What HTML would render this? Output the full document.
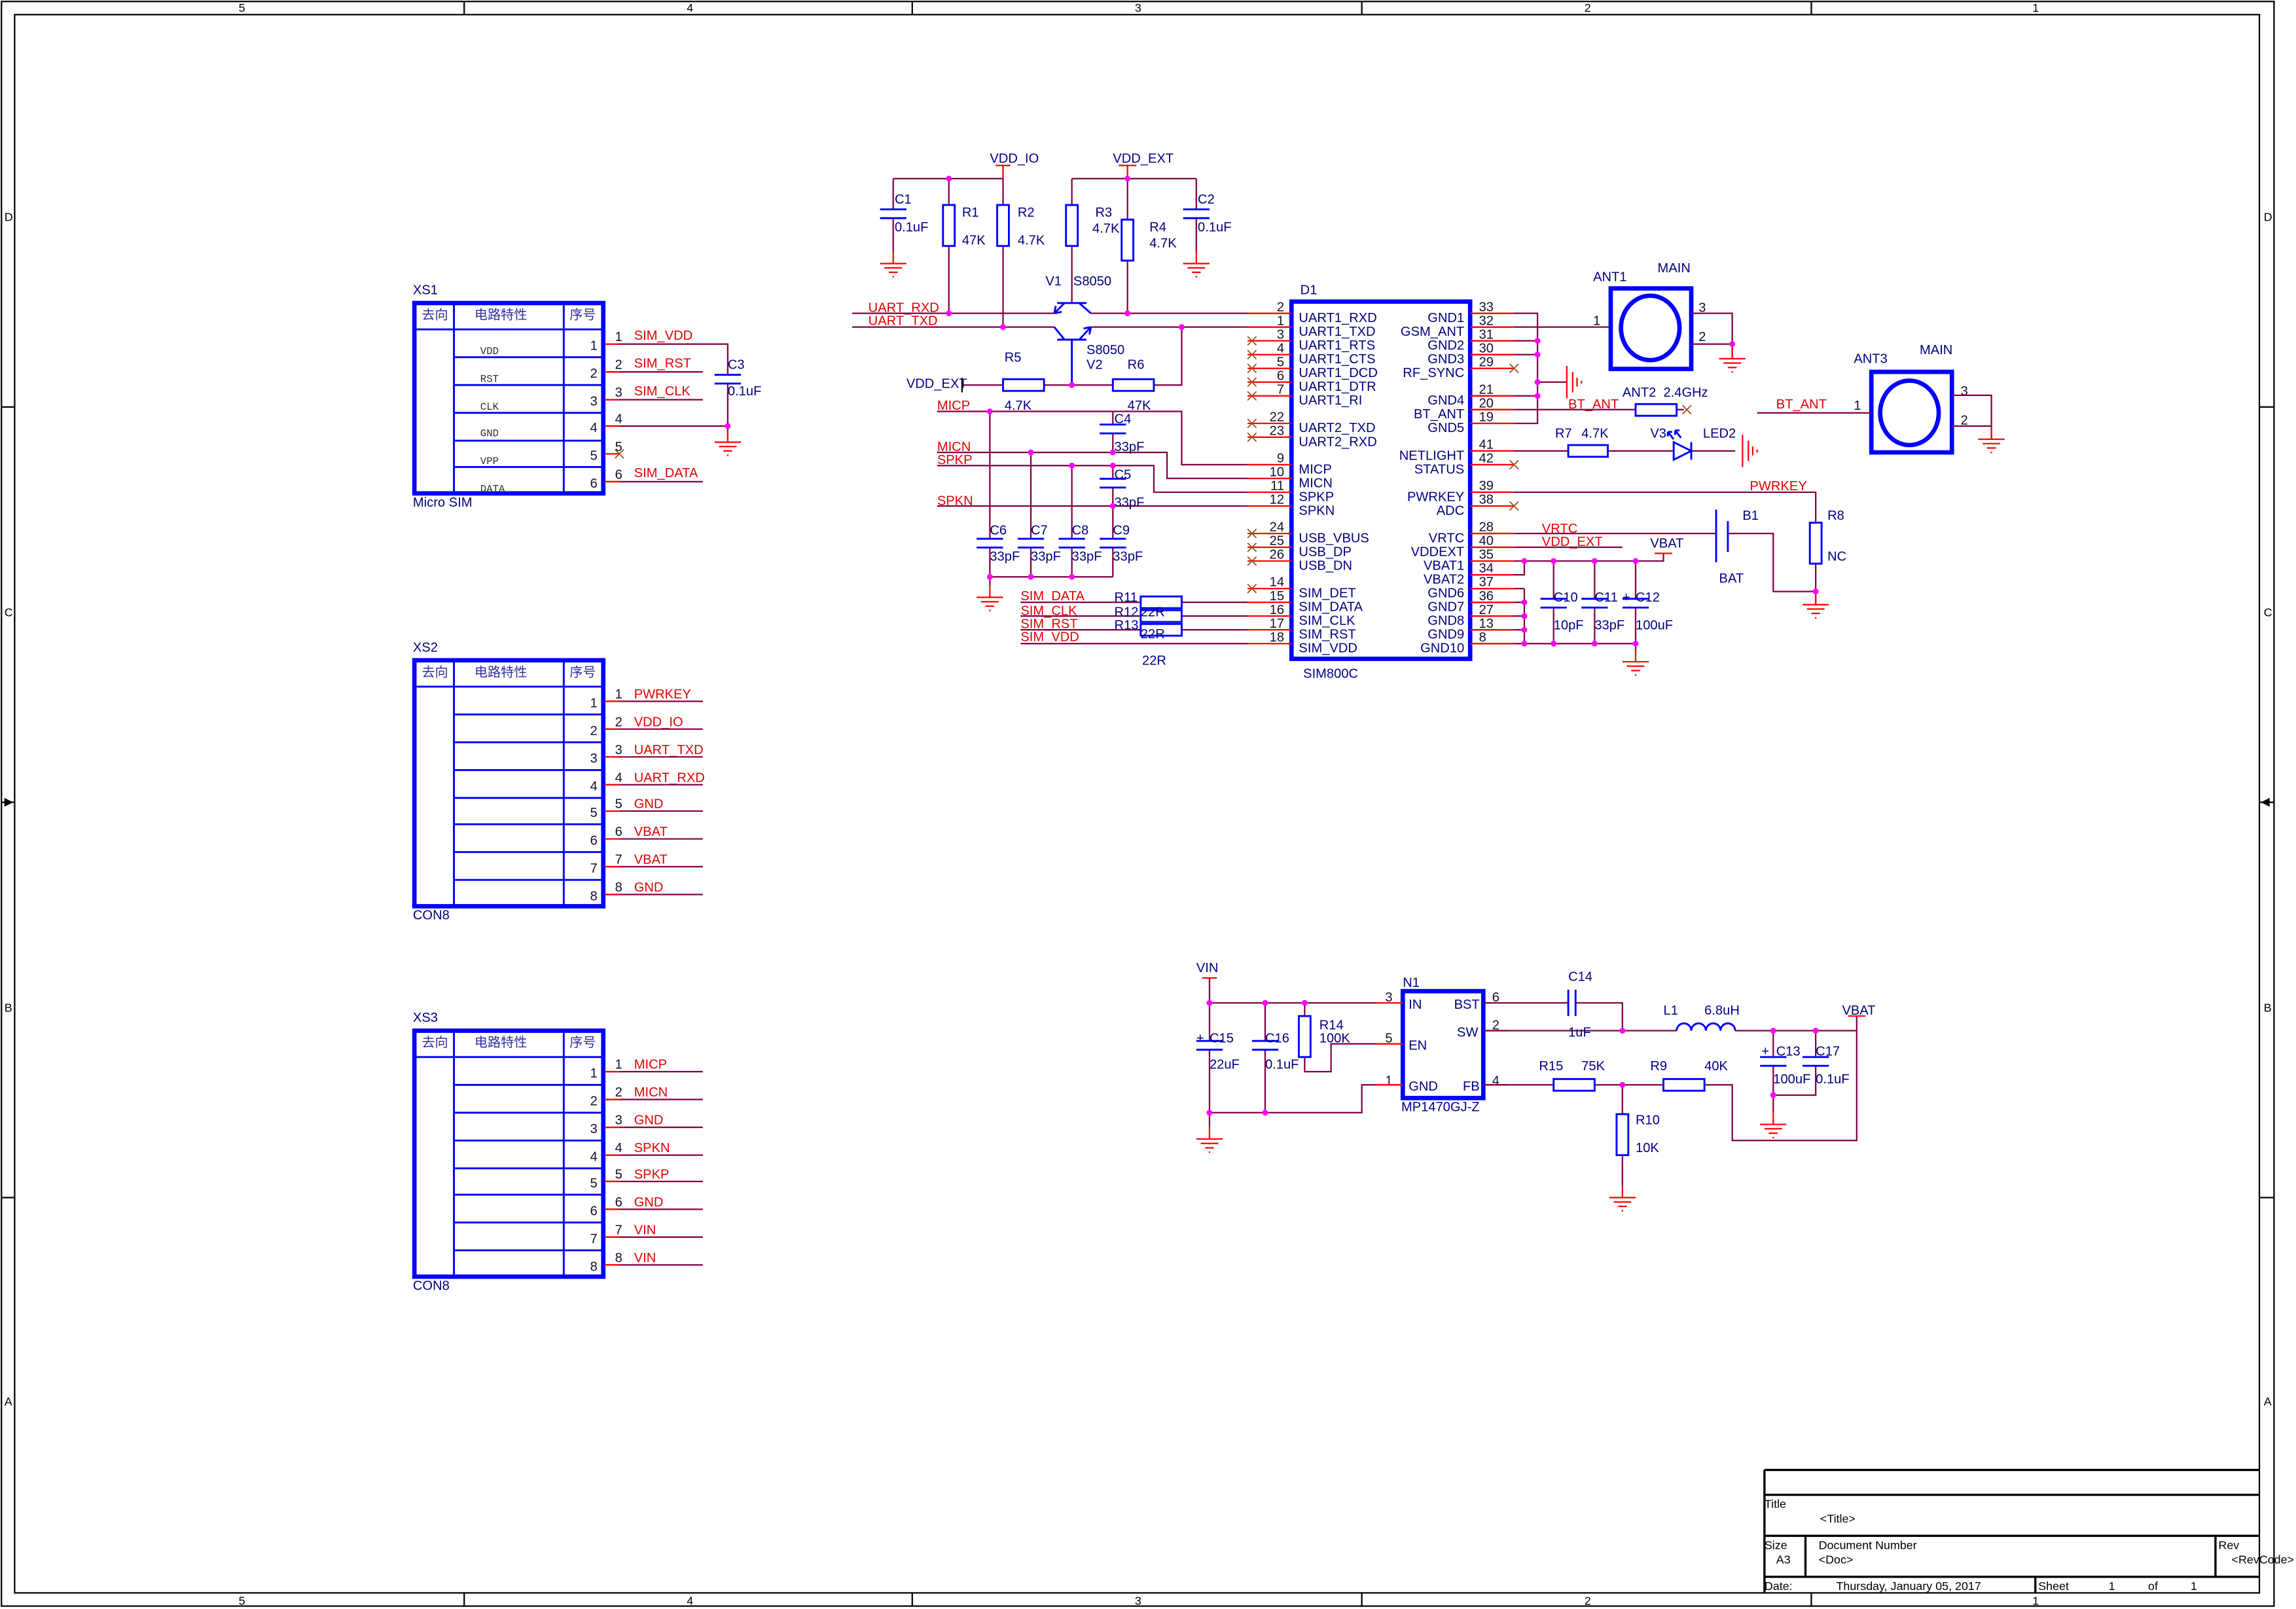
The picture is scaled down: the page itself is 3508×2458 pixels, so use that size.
<!DOCTYPE html>
<html><head><meta charset="utf-8"><style>
html,body{margin:0;padding:0;background:#fff}
svg{display:block}
text{font-family:"Liberation Sans","Noto Sans CJK SC",sans-serif;font-size:9px;fill:#000080}
.w{stroke:#800040;stroke-width:1;fill:none}
.r{stroke:#ff0000;stroke-width:1;fill:none}
.b{stroke:#0000ff;stroke-width:1.3;fill:none}
.B{stroke:#0000ff;stroke-width:3;fill:none}
.k{stroke:#000;stroke-width:1;fill:none}
.n{fill:#e00000}
.p{fill:#101030}
.c{font-family:"Noto Sans CJK SC",sans-serif;fill:#3030a0}
.s{font-family:"Liberation Mono",monospace;font-size:7px;fill:#303030}
.f{fill:#000;font-size:8px}
</style></head><body>
<svg width="3508" height="2458" viewBox="0 0 1568 1099" preserveAspectRatio="none" xmlns="http://www.w3.org/2000/svg">
<defs>
<g id="g"><path class="r" d="M0,-8V0M-9,0H9M-6,3H6M-3,6H3M-0.5,9H0.5"/></g>
<g id="x"><path d="M-3,-3L3,3M-3,3L3,-3" stroke="#a05020" stroke-width="0.8"/></g>
<g id="cap"><path class="b" d="M-9,-3H9M-9,3H9"/></g>
</defs>
<rect width="1568" height="1099" fill="#fff"/>
<!-- frame -->
<rect x="1" y="1" width="1552" height="1096" class="k" stroke="#555"/>
<rect x="10" y="10" width="1533" height="1078" class="k" stroke="#555"/>
<path class="k" stroke="#555" d="M317,1V10M623,1V10M930,1V10M1237,1V10M317,1088V1097M623,1088V1097M930,1088V1097M1237,1088V1097M1,278H10M1,548H10M1,818H10M1543,278H1553M1543,548H1553M1543,818H1553"/>
<g class="f" font-size="7"><text x="163" y="8" class="f">5</text><text x="469" y="8" class="f">4</text><text x="775" y="8" class="f">3</text><text x="1082" y="8" class="f">2</text><text x="1388" y="8" class="f">1</text>
<text x="163" y="1096" class="f">5</text><text x="469" y="1096" class="f">4</text><text x="775" y="1096" class="f">3</text><text x="1082" y="1096" class="f">2</text><text x="1388" y="1096" class="f">1</text>
<text x="3" y="151" class="f">D</text><text x="3" y="421" class="f">C</text><text x="3" y="691" class="f">B</text><text x="3" y="960" class="f">A</text>
<text x="1546" y="151" class="f">D</text><text x="1546" y="421" class="f">C</text><text x="1546" y="691" class="f">B</text><text x="1546" y="960" class="f">A</text></g>
<path d="M3,545L9,548L3,551Z M1550,545L1544,548L1550,551Z" fill="#000"/>
<!-- title block -->
<path d="M1205,1004H1543M1205,1021H1543M1205,1049H1543M1205,1077H1543M1205,1004V1088M1233,1049V1077M1513,1049V1077M1390,1077V1088" stroke="#000" stroke-width="1.5" fill="none"/>
<text x="1205" y="1030" class="f">Title</text><text x="1243" y="1040" class="f">&lt;Title&gt;</text>
<text x="1205" y="1058" class="f">Size</text><text x="1213" y="1068" class="f">A3</text>
<text x="1242" y="1058" class="f">Document Number</text><text x="1242" y="1068" class="f">&lt;Doc&gt;</text>
<text x="1515" y="1058" class="f">Rev</text><text x="1524" y="1068" class="f">&lt;RevCode&gt;</text>
<text x="1205" y="1086" class="f">Date:</text><text x="1254" y="1086" class="f">Thursday, January 05, 2017</text>
<text x="1392" y="1086" class="f">Sheet</text><text x="1440" y="1086" class="f">1</text><text x="1467" y="1086" class="f">of</text><text x="1496" y="1086" class="f">1</text>

<!-- ===== top: pullups and transistors ===== -->
<text x="676" y="111">VDD_IO</text><path class="r" d="M680,113H690M685,113V122"/>
<path class="w" d="M610,122H685M610,122V143M610,149V172M648,122V140M648,168V214M685,122V140M685,168V223.4"/>
<use href="#cap" x="610" y="146"/><use href="#g" x="610" y="180"/>
<rect x="644" y="140" width="8" height="28" class="b"/><rect x="681" y="140" width="8" height="28" class="b"/>
<text x="611" y="139">C1</text><text x="611" y="158">0.1uF</text>
<text x="657" y="148">R1</text><text x="657" y="167">47K</text><text x="695" y="148">R2</text><text x="695" y="167">4.7K</text>
<text x="760" y="111">VDD_EXT</text><path class="r" d="M764,113H776M770,113V122"/>
<path class="w" d="M732,122H817M732,122V140M732,168V207M770,122V150M770,178V214M817,122V143M817,149V172"/>
<rect x="728" y="140" width="8" height="28" class="b"/><rect x="766" y="150" width="8" height="28" class="b"/>
<use href="#cap" x="817" y="146"/><use href="#g" x="817" y="180"/>
<text x="748" y="148">R3</text><text x="746" y="159">4.7K</text><text x="785" y="158">R4</text><text x="785" y="169">4.7K</text>
<text x="818" y="139">C2</text><text x="818" y="158">0.1uF</text>
<!-- V1 -->
<path class="b" d="M722,207H742M727,207L720,214M737,207L745,214M720,214l1,-5M720,214l5,-1"/>
<!-- V2 -->
<path class="b" d="M722,232H742M727,232L720,223.4M737,232L745,223.4M745,223.4l-5,1M745,223.4l-1,5M732,232V263"/>
<text x="714" y="195">V1</text><text x="733" y="195">S8050</text><text x="742" y="242">S8050</text><text x="742" y="252">V2</text>
<text x="593" y="213" class="n">UART_RXD</text><text x="593" y="222" class="n">UART_TXD</text>
<path class="w" d="M582,214H720M745,214H882M582,223.4H720M745,223.4H882M807,223.4V263H788M760,263H713M685,263H657"/>
<path class="k" d="M657,258V268"/>
<rect x="685" y="259" width="28" height="8" class="b"/><rect x="760" y="259" width="28" height="8" class="b"/>
<text x="619" y="265">VDD_EXT</text><text x="686" y="247">R5</text><text x="686" y="280">4.7K</text><text x="770" y="252">R6</text><text x="770" y="280">47K</text>
<!-- audio -->
<text x="640" y="280" class="n">MICP</text><text x="640" y="308" class="n">MICN</text><text x="640" y="317" class="n">SPKP</text><text x="640" y="345" class="n">SPKN</text>
<path class="w" d="M640,281H807V317.4H852M640,309H797V326.8H852M640,318H788V336.2H852M640,345.6H852M760,281V290M760,296V309M760,318V327M760,333V345.6M676,281V368M676,374V394M704,309V368M704,374V394M732,318V368M732,374V394M760,345.6V368M760,374V394M676,394H760M676,394V400"/>
<use href="#cap" x="760" y="293"/><use href="#cap" x="760" y="330"/>
<use href="#cap" x="676" y="371"/><use href="#cap" x="704" y="371"/><use href="#cap" x="732" y="371"/><use href="#cap" x="760" y="371"/>
<use href="#g" x="676" y="408"/>
<text x="761" y="289">C4</text><text x="761" y="308">33pF</text><text x="761" y="327">C5</text><text x="761" y="346">33pF</text>
<text x="676" y="365">C6</text><text x="676" y="383">33pF</text><text x="704" y="365">C7</text><text x="704" y="383">33pF</text>
<text x="732" y="365">C8</text><text x="732" y="383">33pF</text><text x="760" y="365">C9</text><text x="760" y="383">33pF</text>
<!-- SIM -->
<text x="697" y="410" class="n">SIM_DATA</text><text x="697" y="420" class="n">SIM_CLK</text><text x="697" y="429" class="n">SIM_RST</text><text x="697" y="438" class="n">SIM_VDD</text>
<path class="w" d="M697,411.4H779M807,411.4H852M697,420.8H779M807,420.8H852M697,430.2H779M807,430.2H852M697,439.6H852"/>
<rect x="779" y="407.4" width="28" height="8" class="b"/><rect x="779" y="416.8" width="28" height="8" class="b"/><rect x="779" y="426.2" width="28" height="8" class="b"/>
<text x="761" y="411">R11</text><text x="761" y="421">R12</text><text x="761" y="430">R13</text><text x="779" y="421">22R</text><text x="779" y="436">22R</text><text x="780" y="454">22R</text>
<g fill="#ff00ff">
<circle cx="648" cy="122" r="2"/><circle cx="770" cy="122" r="2"/><circle cx="648" cy="214" r="2"/><circle cx="685" cy="223.4" r="2"/><circle cx="770" cy="214" r="2"/><circle cx="807" cy="223.4" r="2"/><circle cx="732" cy="263" r="2"/>
<circle cx="676" cy="281" r="2"/><circle cx="704" cy="309" r="2"/><circle cx="732" cy="318" r="2"/><circle cx="760" cy="309" r="2"/><circle cx="760" cy="318" r="2"/><circle cx="760" cy="345.6" r="2"/><circle cx="676" cy="394" r="2"/><circle cx="704" cy="394" r="2"/><circle cx="732" cy="394" r="2"/>
</g>

<!-- ===== D1 ===== -->
<rect x="882" y="206" width="122" height="244" class="B"/>
<text x="888" y="201">D1</text><text x="890" y="463">SIM800C</text>
<path class="r" d="M852,214H882M852,223.4H882M852,232.8H882M852,242.2H882M852,251.6H882M852,261H882M852,270.4H882M852,289.2H882M852,298.6H882M852,317.4H882M852,326.8H882M852,336.2H882M852,345.6H882M852,364.4H882M852,373.8H882M852,383.2H882M852,402H882M852,411.4H882M852,420.8H882M852,430.2H882M852,439.6H882"/>
<g><use href="#x" x="855" y="232.8"/><use href="#x" x="855" y="242.2"/><use href="#x" x="855" y="251.6"/><use href="#x" x="855" y="261"/><use href="#x" x="855" y="270.4"/><use href="#x" x="855" y="289.2"/><use href="#x" x="855" y="298.6"/><use href="#x" x="855" y="364.4"/><use href="#x" x="855" y="373.8"/><use href="#x" x="855" y="383.2"/><use href="#x" x="855" y="402"/></g>
<g text-anchor="end">
<text x="877" y="212.5" class="p">2</text><text x="877" y="222" class="p">1</text><text x="877" y="231.3" class="p">3</text><text x="877" y="240.7" class="p">4</text><text x="877" y="250.1" class="p">5</text><text x="877" y="259.5" class="p">6</text><text x="877" y="268.9" class="p">7</text><text x="877" y="287.7" class="p">22</text><text x="877" y="297.1" class="p">23</text><text x="877" y="315.9" class="p">9</text><text x="877" y="325.3" class="p">10</text><text x="877" y="334.7" class="p">11</text><text x="877" y="344.1" class="p">12</text><text x="877" y="362.9" class="p">24</text><text x="877" y="372.3" class="p">25</text><text x="877" y="381.7" class="p">26</text><text x="877" y="400.5" class="p">14</text><text x="877" y="409.9" class="p">15</text><text x="877" y="419.3" class="p">16</text><text x="877" y="428.7" class="p">17</text><text x="877" y="438.1" class="p">18</text>
</g>
<g>
<text x="887" y="220">UART1_RXD</text><text x="887" y="229.4">UART1_TXD</text><text x="887" y="238.8">UART1_RTS</text><text x="887" y="248.2">UART1_CTS</text><text x="887" y="257.6">UART1_DCD</text><text x="887" y="267">UART1_DTR</text><text x="887" y="276.4">UART1_RI</text><text x="887" y="295.2">UART2_TXD</text><text x="887" y="304.6">UART2_RXD</text><text x="887" y="323.4">MICP</text><text x="887" y="332.8">MICN</text><text x="887" y="342.2">SPKP</text><text x="887" y="351.6">SPKN</text><text x="887" y="370.4">USB_VBUS</text><text x="887" y="379.8">USB_DP</text><text x="887" y="389.2">USB_DN</text><text x="887" y="408">SIM_DET</text><text x="887" y="417.4">SIM_DATA</text><text x="887" y="426.8">SIM_CLK</text><text x="887" y="436.2">SIM_RST</text><text x="887" y="445.6">SIM_VDD</text>
</g>
<g text-anchor="end">
<text x="1000" y="220">GND1</text><text x="1000" y="229.4">GSM_ANT</text><text x="1000" y="238.8">GND2</text><text x="1000" y="248.2">GND3</text><text x="1000" y="257.6">RF_SYNC</text><text x="1000" y="276.4">GND4</text><text x="1000" y="285.8">BT_ANT</text><text x="1000" y="295.2">GND5</text><text x="1000" y="314">NETLIGHT</text><text x="1000" y="323.4">STATUS</text><text x="1000" y="342.2">PWRKEY</text><text x="1000" y="351.6">ADC</text><text x="1000" y="370.4">VRTC</text><text x="1000" y="379.8">VDDEXT</text><text x="1000" y="389.2">VBAT1</text><text x="1000" y="398.6">VBAT2</text><text x="1000" y="408">GND6</text><text x="1000" y="417.4">GND7</text><text x="1000" y="426.8">GND8</text><text x="1000" y="436.2">GND9</text><text x="1000" y="445.6">GND10</text>
</g>
<g>
<text x="1010" y="212.5" class="p">33</text><text x="1010" y="222" class="p">32</text><text x="1010" y="231.3" class="p">31</text><text x="1010" y="240.7" class="p">30</text><text x="1010" y="250.1" class="p">29</text><text x="1010" y="268.9" class="p">21</text><text x="1010" y="278.3" class="p">20</text><text x="1010" y="287.7" class="p">19</text><text x="1010" y="306.5" class="p">41</text><text x="1010" y="315.9" class="p">42</text><text x="1010" y="334.7" class="p">39</text><text x="1010" y="344.1" class="p">38</text><text x="1010" y="362.9" class="p">28</text><text x="1010" y="372.3" class="p">40</text><text x="1010" y="381.7" class="p">35</text><text x="1010" y="391.1" class="p">34</text><text x="1010" y="400.5" class="p">37</text><text x="1010" y="409.9" class="p">36</text><text x="1010" y="419.3" class="p">27</text><text x="1010" y="428.7" class="p">13</text><text x="1010" y="438.1" class="p">8</text>
</g>
<!-- right wires -->
<path class="w" d="M1004,214H1050V289.2H1004M1004,232.8H1050M1004,242.2H1050M1004,270.4H1050M1050,261H1070M1004,223.4H1100M1004,279.8H1117M1145,279.8H1150M1004,308H1071M1098,308H1143M1155,308H1185M1004,336.2H1240V357M1240,385V404H1211V364.4H1180M1172,364.4H1004M1004,373.8H1108M1004,383.2H1136V378M1004,392.6H1041V383.2M1004,402H1041M1004,411.4H1041M1004,420.8H1041M1004,430.2H1041M1041,402V439.6M1004,439.6H1117M1061,383.2V409M1061,415V439.6M1089,383.2V409M1089,415V439.6M1117,383.2V409M1117,415V439.6V448M1240,404V413"/>
<path class="r" d="M1004,214H1034M1004,223.4H1034M1004,232.8H1034M1004,242.2H1034M1004,251.6H1034M1004,270.4H1034M1004,279.8H1034M1004,289.2H1034M1004,308H1034M1004,317.4H1034M1004,336.2H1034M1004,345.6H1034M1004,364.4H1034M1004,373.8H1034M1004,383.2H1034M1004,392.6H1034M1004,402H1034M1004,411.4H1034M1004,420.8H1034M1004,430.2H1034M1004,439.6H1034M1130,378H1142"/>
<use href="#x" x="1034" y="251.6"/><use href="#x" x="1034" y="317.4"/><use href="#x" x="1034" y="345.6"/><use href="#x" x="1152" y="279.8"/>
<!-- chassis grounds -->
<path class="r" d="M1070,250V272M1074,254V268M1077,258V264M1080,260V262M1190,297V319M1194,301V315M1197,305V311M1200,307V309"/>
<!-- ANT1 -->
<rect x="1100" y="197" width="55" height="55" class="B"/><ellipse cx="1127" cy="224" rx="20" ry="22" class="B" stroke-width="2.5"/>
<text x="1088" y="192">ANT1</text><text x="1132" y="186">MAIN</text><text x="1088" y="222" class="p">1</text><text x="1160" y="213" class="p">3</text><text x="1160" y="233" class="p">2</text>
<path class="w" d="M1155,214H1183V245M1155,235H1183"/><use href="#g" x="1183" y="245"/>
<!-- ANT2 -->
<rect x="1117" y="276" width="28" height="8" class="b"/>
<text x="1071" y="279" class="n">BT_ANT</text><text x="1108" y="271">ANT2</text><text x="1136" y="271">2.4GHz</text>
<!-- R7 LED -->
<rect x="1071" y="304" width="27" height="8" class="b"/>
<path class="b" d="M1143,302V314L1155,308ZM1155,302V314M1143,300l-4,-5M1139,295l0,3M1139,295l3,0M1148,299l-4,-5M1144,294l0,3M1144,294l3,0"/>
<text x="1062" y="299">R7</text><text x="1080" y="299">4.7K</text><text x="1127" y="299">V3</text><text x="1163" y="299">LED2</text>
<!-- PWRKEY R8 -->
<text x="1195" y="335" class="n">PWRKEY</text>
<rect x="1236" y="357" width="8" height="28" class="b"/><text x="1248" y="355">R8</text><text x="1248" y="383">NC</text>
<use href="#g" x="1240" y="413"/>
<path class="b" d="M1172,348V384M1180,356V377"/>
<text x="1190" y="355">B1</text><text x="1174" y="398">BAT</text>
<text x="1053" y="364" class="n">VRTC</text><text x="1053" y="373" class="n">VDD_EXT</text><text x="1127" y="374">VBAT</text>
<use href="#cap" x="1061" y="412"/><use href="#cap" x="1089" y="412"/><use href="#cap" x="1117" y="412"/>
<text x="1061" y="411">C10</text><text x="1061" y="430">10pF</text><text x="1089" y="411">C11</text><text x="1089" y="430">33pF</text><text x="1108" y="411">+</text><text x="1117" y="411">C12</text><text x="1117" y="430">100uF</text>
<use href="#g" x="1117" y="452"/>
<g fill="#ff00ff"><circle cx="1050" cy="232.8" r="2"/><circle cx="1050" cy="242.2" r="2"/><circle cx="1050" cy="261" r="2"/><circle cx="1050" cy="270.4" r="2"/><circle cx="1183" cy="235" r="2"/><circle cx="1240" cy="404" r="2"/>
<circle cx="1041" cy="383.2" r="2"/><circle cx="1061" cy="383.2" r="2"/><circle cx="1089" cy="383.2" r="2"/><circle cx="1117" cy="383.2" r="2"/>
<circle cx="1041" cy="411.4" r="2"/><circle cx="1041" cy="420.8" r="2"/><circle cx="1041" cy="430.2" r="2"/><circle cx="1041" cy="439.6" r="2"/><circle cx="1061" cy="439.6" r="2"/><circle cx="1089" cy="439.6" r="2"/><circle cx="1117" cy="439.6" r="2"/></g>
<!-- ANT3 -->
<rect x="1278" y="254" width="55" height="55" class="B"/><ellipse cx="1304" cy="282" rx="20" ry="22" class="B" stroke-width="2.5"/>
<text x="1266" y="248">ANT3</text><text x="1311" y="242">MAIN</text><text x="1213" y="279" class="n">BT_ANT</text><text x="1266" y="280" class="p">1</text><text x="1339" y="270" class="p">3</text><text x="1339" y="290" class="p">2</text>
<path class="w" d="M1200,282H1278M1333,270H1360V300M1333,291H1360"/><use href="#g" x="1360" y="300"/>

<!-- ===== XS1 ===== -->
<text x="282" y="201">XS1</text><text x="282" y="346">Micro SIM</text>
<rect x="283" y="207" width="129" height="130" class="B"/>
<path class="b" d="M310,207V337M385,207V337M283,225H412M310,244H412M310,263H412M310,282H412M310,301H412M310,319H412"/>
<text x="288" y="218" class="c">去向</text><text x="324" y="218" class="c">电路特性</text><text x="389" y="218" class="c">序号</text>
<g class="s"><text x="328" y="242" class="s">VDD</text><text x="328" y="261" class="s">RST</text><text x="328" y="280" class="s">CLK</text><text x="328" y="298" class="s">GND</text><text x="328" y="317" class="s">VPP</text><text x="328" y="336" class="s">DATA</text></g>
<g><text x="403" y="239" class="p">1</text><text x="403" y="258" class="p">2</text><text x="403" y="277" class="p">3</text><text x="403" y="295" class="p">4</text><text x="403" y="314" class="p">5</text><text x="403" y="333" class="p">6</text>
<text x="420" y="233" class="p">1</text><text x="420" y="252" class="p">2</text><text x="420" y="271" class="p">3</text><text x="420" y="289" class="p">4</text><text x="420" y="308" class="p">5</text><text x="420" y="327" class="p">6</text></g>
<text x="433" y="232" class="n">SIM_VDD</text><text x="433" y="251" class="n">SIM_RST</text><text x="433" y="270" class="n">SIM_CLK</text><text x="433" y="326" class="n">SIM_DATA</text>
<path class="w" d="M413,235H497V256M497,262V300M413,254H480M413,273H480M413,291H497M413,329H480"/>
<path class="r" d="M413,235H423M413,254H423M413,273H423M413,291H423M413,310H423M413,329H423"/>
<use href="#x" x="423" y="310"/><use href="#cap" x="497" y="259"/><use href="#g" x="497" y="302"/>
<circle cx="497" cy="291" r="2" fill="#ff00ff"/>
<text x="497" y="252">C3</text><text x="497" y="270">0.1uF</text>

<!-- ===== XS2 ===== -->
<text x="282" y="445">XS2</text><text x="282" y="628">CON8</text>
<rect x="283" y="451" width="129" height="168" class="B"/>
<path class="b" d="M310,451V619M385,451V619M283,469H412M310,488H412M310,507H412M310,526H412M310,545H412M310,563H412M310,582H412M310,601H412"/>
<text x="288" y="462" class="c">去向</text><text x="324" y="462" class="c">电路特性</text><text x="389" y="462" class="c">序号</text>
<g>
<text x="403" y="483" class="p">1</text><text x="403" y="502" class="p">2</text><text x="403" y="521" class="p">3</text><text x="403" y="540" class="p">4</text><text x="403" y="558" class="p">5</text><text x="403" y="577" class="p">6</text><text x="403" y="596" class="p">7</text><text x="403" y="615" class="p">8</text>
<text x="420" y="477" class="p">1</text><text x="420" y="496" class="p">2</text><text x="420" y="515" class="p">3</text><text x="420" y="534" class="p">4</text><text x="420" y="552" class="p">5</text><text x="420" y="571" class="p">6</text><text x="420" y="590" class="p">7</text><text x="420" y="609" class="p">8</text>
<text x="433" y="477" class="n">PWRKEY</text><text x="433" y="496" class="n">VDD_IO</text><text x="433" y="515" class="n">UART_TXD</text><text x="433" y="534" class="n">UART_RXD</text><text x="433" y="552" class="n">GND</text><text x="433" y="571" class="n">VBAT</text><text x="433" y="590" class="n">VBAT</text><text x="433" y="609" class="n">GND</text>
</g>
<path class="w" d="M413,479H480M413,498H480M413,517H480M413,536H480M413,554H480M413,573H480M413,592H480M413,611H480"/>
<path class="r" d="M413,479H423M413,498H423M413,517H423M413,536H423M413,554H423M413,573H423M413,592H423M413,611H423"/>

<!-- ===== XS3 ===== -->
<text x="282" y="698">XS3</text><text x="282" y="881">CON8</text>
<rect x="283" y="704" width="129" height="168" class="B"/>
<path class="b" d="M310,704V872M385,704V872M283,722H412M310,741H412M310,760H412M310,779H412M310,798H412M310,816H412M310,835H412M310,854H412"/>
<text x="288" y="715" class="c">去向</text><text x="324" y="715" class="c">电路特性</text><text x="389" y="715" class="c">序号</text>
<g>
<text x="403" y="736" class="p">1</text><text x="403" y="755" class="p">2</text><text x="403" y="774" class="p">3</text><text x="403" y="793" class="p">4</text><text x="403" y="811" class="p">5</text><text x="403" y="830" class="p">6</text><text x="403" y="849" class="p">7</text><text x="403" y="868" class="p">8</text>
<text x="420" y="730" class="p">1</text><text x="420" y="749" class="p">2</text><text x="420" y="768" class="p">3</text><text x="420" y="787" class="p">4</text><text x="420" y="805" class="p">5</text><text x="420" y="824" class="p">6</text><text x="420" y="843" class="p">7</text><text x="420" y="862" class="p">8</text>
<text x="433" y="730" class="n">MICP</text><text x="433" y="749" class="n">MICN</text><text x="433" y="768" class="n">GND</text><text x="433" y="787" class="n">SPKN</text><text x="433" y="805" class="n">SPKP</text><text x="433" y="824" class="n">GND</text><text x="433" y="843" class="n">VIN</text><text x="433" y="862" class="n">VIN</text>
</g>
<path class="w" d="M413,732H480M413,751H480M413,770H480M413,789H480M413,807H480M413,826H480M413,845H480M413,864H480"/>
<path class="r" d="M413,732H423M413,751H423M413,770H423M413,789H423M413,807H423M413,826H423M413,845H423M413,864H423"/>

<!-- ===== power ===== -->
<text x="817" y="664">VIN</text><path class="r" d="M821,668H831"/>
<path class="w" d="M826,668V711M826,717V760V770M826,685H958M864,685V711M864,717V760M891,685V694M891,722V732H909V713H958M826,760H930V741H958"/>
<use href="#cap" x="826" y="714"/><use href="#cap" x="864" y="714"/><use href="#g" x="826" y="778"/>
<rect x="887" y="694" width="8" height="28" class="b"/>
<text x="817" y="712">+</text><text x="826" y="712">C15</text><text x="826" y="730">22uF</text><text x="864" y="712">C16</text><text x="864" y="730">0.1uF</text><text x="901" y="703">R14</text><text x="901" y="712">100K</text>
<rect x="958" y="677" width="55" height="73" class="B"/>
<text x="958" y="674">N1</text><text x="957" y="759">MP1470GJ-Z</text>
<text x="962" y="689">IN</text><text x="993" y="689">BST</text><text x="962" y="717">EN</text><text x="995" y="708">SW</text><text x="962" y="745">GND</text><text x="999" y="745">FB</text>
<text x="946" y="684" class="p">3</text><text x="946" y="712" class="p">5</text><text x="946" y="741" class="p">1</text><text x="1019" y="684" class="p">6</text><text x="1019" y="703" class="p">2</text><text x="1019" y="741" class="p">4</text>
<path class="r" d="M940,685H958M940,713H958M940,741H958M1013,685H1030M1013,704H1030M1013,741H1030"/>
<path class="w" d="M1013,685H1071M1076,685H1108V704M1013,704H1145M1185,704H1268M1268,694V779H1183V741H1164M1136,741H1108M1089,741H1108M1061,741H1013M1108,741V761M1108,789V810M1211,704V722M1211,728V748V760M1240,704V722M1240,728V748H1211"/>
<path class="b" d="M1071,676V694M1076,676V694M1145,704a5,5 0 0 1 10,0a5,5 0 0 1 10,0a5,5 0 0 1 10,0a5,5 0 0 1 10,0"/>
<path class="r" d="M1262,694H1274"/>
<rect x="1061" y="737" width="28" height="8" class="b"/><rect x="1136" y="737" width="28" height="8" class="b"/><rect x="1104" y="761" width="8" height="28" class="b"/>
<use href="#cap" x="1211" y="725"/><use href="#cap" x="1240" y="725"/><use href="#g" x="1211" y="768"/><use href="#g" x="1108" y="818"/>
<text x="1071" y="670">C14</text><text x="1071" y="708">1uF</text><text x="1136" y="693">L1</text><text x="1164" y="693">6.8uH</text><text x="1258" y="693">VBAT</text>
<text x="1051" y="731">R15</text><text x="1080" y="731">75K</text><text x="1127" y="731">R9</text><text x="1164" y="731">40K</text><text x="1117" y="768">R10</text><text x="1117" y="787">10K</text>
<text x="1203" y="721">+</text><text x="1213" y="721">C13</text><text x="1211" y="740">100uF</text><text x="1240" y="721">C17</text><text x="1240" y="740">0.1uF</text>
<g fill="#ff00ff"><circle cx="826" cy="685" r="2"/><circle cx="864" cy="685" r="2"/><circle cx="891" cy="685" r="2"/><circle cx="826" cy="760" r="2"/><circle cx="864" cy="760" r="2"/><circle cx="1108" cy="704" r="2"/><circle cx="1211" cy="704" r="2"/><circle cx="1240" cy="704" r="2"/><circle cx="1108" cy="741" r="2"/><circle cx="1211" cy="748" r="2"/></g>
</svg>
</body></html>
